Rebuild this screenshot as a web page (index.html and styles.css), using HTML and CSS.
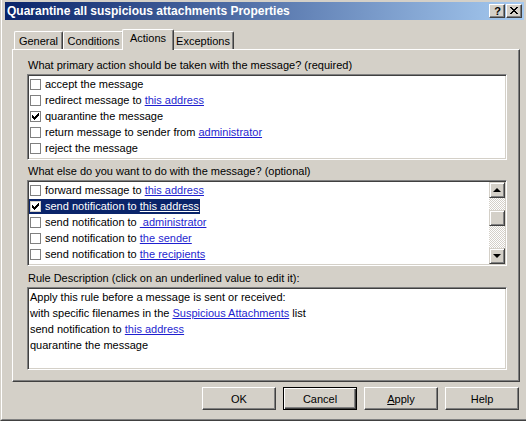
FILE: index.html
```html
<!DOCTYPE html>
<html>
<head>
<meta charset="utf-8">
<title>Quarantine all suspicious attachments Properties</title>
<link rel="stylesheet" href="styles.css">
</head>
<body>
<div class="window">
  <div class="frame">
    <div class="titlebar">
      <span class="title">Quarantine all suspicious attachments Properties</span>
      <div class="caption-btns">
        <span class="cap-btn cap-help">?</span>
        <span class="cap-btn cap-close">
          <svg width="8" height="7" viewBox="0 0 8 7" shape-rendering="crispEdges"><path d="M0 0h2v1H0zM6 0h2v1H6zM1 1h2v1H1zM5 1h2v1H5zM2 2h4v1H2zM3 3h2v1H3zM2 4h4v1H2zM1 5h2v1H1zM5 5h2v1H5zM0 6h2v1H0zM6 6h2v1H6z" fill="#000"/></svg>
        </span>
      </div>
    </div>

    <div class="dialog">
      <div class="tabs">
        <div class="tab t-general">General</div>
        <div class="tab t-conditions">Conditions</div>
        <div class="tab t-actions active">Actions</div>
        <div class="tab t-exceptions">Exceptions</div>
      </div>

      <div class="panel">
        <div class="label">What primary action should be taken with the message? (required)</div>
        <div class="listbox list1">
          <div class="rows">
            <div class="item"><span class="cb"></span><span class="txt">accept the message</span></div>
            <div class="item"><span class="cb"></span><span class="txt">redirect message to <a class="lnk">this address</a></span></div>
            <div class="item"><span class="cb checked"><svg width="7" height="7" viewBox="0 0 7 7" shape-rendering="crispEdges"><path d="M0 2h1v3H0zM1 3h1v3H1zM2 4h1v3H2zM3 3h1v3H3zM4 2h1v3H4zM5 1h1v3H5zM6 0h1v3H6z" fill="#000"/></svg></span><span class="txt">quarantine the message</span></div>
            <div class="item"><span class="cb"></span><span class="txt">return message to sender from <a class="lnk">administrator</a></span></div>
            <div class="item"><span class="cb"></span><span class="txt">reject the message</span></div>
          </div>
        </div>

        <div class="label label2">What else do you want to do with the message? (optional)</div>
        <div class="listbox list2">
          <div class="rows">
            <div class="item"><span class="cb"></span><span class="txt">forward message to <a class="lnk">this address</a></span></div>
            <div class="item"><span class="sel"><span class="cb checked"><svg width="7" height="7" viewBox="0 0 7 7" shape-rendering="crispEdges"><path d="M0 2h1v3H0zM1 3h1v3H1zM2 4h1v3H2zM3 3h1v3H3zM4 2h1v3H4zM5 1h1v3H5zM6 0h1v3H6z" fill="#000"/></svg></span><span class="txt">send notification to <a class="lnk">this address</a></span></span></div>
            <div class="item"><span class="cb"></span><span class="txt">send notification to <a class="lnk">&nbsp;administrator</a></span></div>
            <div class="item"><span class="cb"></span><span class="txt">send notification to <a class="lnk">the sender</a></span></div>
            <div class="item"><span class="cb"></span><span class="txt">send notification to <a class="lnk">the recipients</a></span></div>
          </div>
          <div class="scrollbar">
            <span class="sb-btn"><span class="arrow-up"></span></span>
            <div class="sb-track"><span class="sb-thumb"></span></div>
            <span class="sb-btn"><span class="arrow-down"></span></span>
          </div>
        </div>

        <div class="label label3">Rule Description (click on an underlined value to edit it):</div>
        <div class="listbox desc">
          <div class="line">Apply this rule before a message is sent or received:</div>
          <div class="line">with specific filenames in the <a class="lnk">Suspicious Attachments</a> list</div>
          <div class="line">send notification to <a class="lnk">this address</a></div>
          <div class="line">quarantine the message</div>
        </div>
      </div>

      <div class="buttons">
        <span class="btn">OK</span>
        <span class="btn default">Cancel</span>
        <span class="btn"><u>A</u>pply</span>
        <span class="btn">Help</span>
      </div>
    </div>
  </div>
</div>
</body>
</html>
```

FILE: styles.css
```css
* { box-sizing: border-box; }

html, body {
  margin: 0;
  padding: 0;
  background: #d4d0c8;
}

body {
  font-family: "Liberation Sans", Arial, sans-serif;
  font-size: 11px;
  color: #000;
}

.window {
  width: 526px;
  height: 421px;
  border-left: 1px solid #d4d0c8;
  border-bottom: 1px solid #404040;
}

.frame {
  height: 100%;
  border-left: 1px solid #ffffff;
  border-bottom: 1px solid #808080;
  padding: 2px 2px 0 3px;
  display: flex;
  flex-direction: column;
}

/* ---------- title bar ---------- */
.titlebar {
  height: 18px;
  background: linear-gradient(to right, #0a246a, #a6caf0);
  display: flex;
  align-items: center;
  justify-content: space-between;
  padding-left: 2px;
}

.title {
  color: #fff;
  font-weight: bold;
  font-size: 12px;
  line-height: 18px;
  white-space: nowrap;
}

.caption-btns {
  display: flex;
  gap: 1px;
  margin-right: 2px;
}

.cap-btn {
  width: 16px;
  height: 14px;
  background: #d4d0c8;
  border: 1px solid;
  border-color: #fff #404040 #404040 #fff;
  box-shadow: inset -1px -1px #808080;
  display: flex;
  align-items: center;
  justify-content: center;
}

.cap-help {
  font-weight: bold;
  font-size: 11px;
  line-height: 12px;
  padding-left: 1px;
}

.cap-close svg { display: block; margin-top: -1px; }

/* ---------- dialog ---------- */
.dialog {
  flex: 1;
  padding: 9px 4px 0 7px;
  display: flex;
  flex-direction: column;
}

.tabs {
  height: 20px;
  display: flex;
  align-items: flex-end;
  padding-left: 2px;
  position: relative;
  z-index: 2;
}

.tab {
  height: 18px;
  background: #d4d0c8;
  border-top: 1px solid #fff;
  border-left: 1px solid #fff;
  border-right: 1px solid #404040;
  box-shadow: inset -1px 0 #808080;
  border-radius: 2px 2px 0 0;
  text-align: center;
  line-height: 17px;
  padding-top: 1px;
  white-space: nowrap;
}

.t-general { width: 49px; }
.t-conditions { width: 61px; }
.t-actions { width: 48px; }
.t-exceptions { width: 62px; }

.tab.active {
  width: 52px;
  height: 21px;
  margin: 0 -2px -1px -2px;
  line-height: 17px;
  padding-top: 0;
  position: relative;
  z-index: 3;
}

.panel {
  height: 333px;
  background: #d4d0c8;
  border: 1px solid;
  border-color: #fff #404040 #404040 #fff;
  box-shadow: inset -1px -1px #808080;
  padding: 8px 12px 0 14px;
  display: flex;
  flex-direction: column;
  position: relative;
  z-index: 1;
}

.label {
  height: 14px;
  line-height: 14px;
  padding-left: 1px;
  white-space: nowrap;
}

.label2 { margin-top: 4px; }
.label3 { margin-top: 5px; }

.listbox {
  margin-top: 2px;
  background: #fff;
  border: 1px solid;
  border-color: #808080 #fff #fff #808080;
  box-shadow: inset 1px 1px #404040, inset -1px -1px #d4d0c8;
  padding: 1px;
}

.list1 { height: 86px; }
.list2 { height: 86px; display: flex; }
.desc { height: 83px; }

.rows { flex: 1; }

.item {
  height: 16px;
  display: flex;
  align-items: center;
  padding-left: 1px;
  white-space: nowrap;
}

.cb {
  width: 11px;
  height: 11px;
  flex: none;
  background: #fff;
  border: 1px solid #808080;
  display: flex;
  align-items: center;
  justify-content: center;
}

.cb svg { display: block; }

.txt { margin-left: 4px; line-height: 14px; }

.lnk {
  color: #1f1fd0;
  text-decoration: underline;
}

.sel {
  display: flex;
  align-items: center;
  height: 15px;
  margin-left: -1px;
  padding-left: 1px;
  padding-right: 1px;
  background: #0a246a;
  color: #fff;
}

.sel .lnk { color: #fff; }
.sel .cb { border-color: #d4d0c8; }

/* scrollbar */
.scrollbar {
  width: 16px;
  display: flex;
  flex-direction: column;
}

.sb-btn, .sb-thumb {
  width: 16px;
  height: 16px;
  flex: none;
  background: #d4d0c8;
  border: 1px solid;
  border-color: #d4d0c8 #404040 #404040 #d4d0c8;
  box-shadow: inset 1px 1px #fff, inset -1px -1px #808080;
  display: flex;
  align-items: center;
  justify-content: center;
}

.sb-track {
  flex: 1;
  background: repeating-conic-gradient(#d4d0c8 0 25%, #fff 0 50%) 0 0 / 2px 2px;
  padding-top: 12px;
}

.sb-thumb { display: block; }

.arrow-up {
  width: 0;
  height: 0;
  border-left: 4px solid transparent;
  border-right: 4px solid transparent;
  border-bottom: 4px solid #000;
}

.arrow-down {
  width: 0;
  height: 0;
  border-left: 4px solid transparent;
  border-right: 4px solid transparent;
  border-top: 4px solid #000;
}

.desc .line {
  height: 16px;
  line-height: 16px;
  padding-left: 1px;
  white-space: nowrap;
}

/* buttons */
.buttons {
  margin-top: 5px;
  display: flex;
  justify-content: flex-end;
  gap: 7px;
  padding-right: 1px;
}

.btn {
  width: 74px;
  height: 23px;
  background: #d4d0c8;
  border: 1px solid;
  border-color: #fff #404040 #404040 #fff;
  box-shadow: inset -1px -1px #808080;
  display: flex;
  align-items: center;
  justify-content: center;
}

.btn.default {
  border: 1px solid #000;
  box-shadow: inset 1px 1px #fff, inset -1px -1px #404040, inset -2px -2px #808080;
}
```
